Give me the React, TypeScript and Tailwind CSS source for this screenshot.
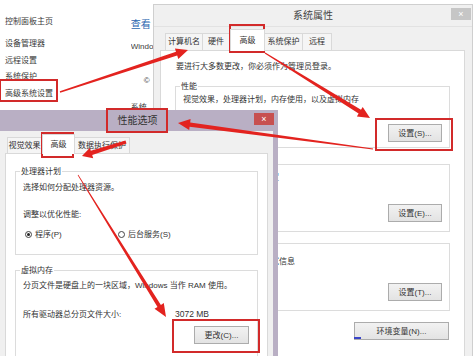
import React from "react";

const FONT = "font-['Liberation_Sans','Noto_Sans_CJK_SC',sans-serif]";

type Pt = [number, number];

// tapered arrow: thin at the tail, wide near the head
function arrowPoints(a: Pt, b: Pt, w1 = 1, w2 = 4, hl = 12, hw = 11) {
  const dx = b[0] - a[0];
  const dy = b[1] - a[1];
  const len = Math.hypot(dx, dy);
  const ux = dx / len;
  const uy = dy / len;
  const nx = -uy;
  const ny = ux;
  const bx = b[0] - ux * hl;
  const by = b[1] - uy * hl;
  const p = (x: number, y: number) => `${x.toFixed(1)},${y.toFixed(1)}`;
  return [
    p(a[0] + (nx * w1) / 2, a[1] + (ny * w1) / 2),
    p(bx + (nx * w2) / 2, by + (ny * w2) / 2),
    p(bx + (nx * hw) / 2, by + (ny * hw) / 2),
    p(b[0], b[1]),
    p(bx - (nx * hw) / 2, by - (ny * hw) / 2),
    p(bx - (nx * w2) / 2, by - (ny * w2) / 2),
    p(a[0] - (nx * w1) / 2, a[1] - (ny * w1) / 2),
  ].join(" ");
}

const arrows: { a: Pt; b: Pt; w1?: number; w2?: number; hl?: number; hw?: number }[] = [
  { a: [60, 92], b: [188, 50], w1: 1.5, w2: 4 },
  { a: [265, 53], b: [370, 118], w1: 1, w2: 4.5 },
  { a: [373, 149], b: [178, 123], w1: 0.8, w2: 4.5 },
  { a: [126, 142], b: [82, 156], w1: 3, w2: 4.5, hl: 10, hw: 11 },
  { a: [78, 175], b: [166, 317], w1: 0.8, w2: 4, hl: 13, hw: 11 },
];

const boxes = [
  { x: 0, y: 80, w: 57, h: 21 },
  { x: 230, y: 25, w: 34, h: 27 },
  { x: 376, y: 119, w: 76, h: 31 },
  { x: 107, y: 109, w: 60, h: 23 },
  { x: 42, y: 133, w: 31, h: 24 },
  { x: 173, y: 320, w: 86, h: 32 },
];

function Btn({ label, className }: { label: string; className: string }) {
  return (
    <div
      className={`h-[18px] border border-[#acacac] bg-linear-to-b from-[#f2f2f2] to-[#e3e3e3] flex items-center justify-center text-[8px] text-[#333] ${className}`}
    >
      {label}
    </div>
  );
}

function Group({ label, className, children }: { label: string; className: string; children?: React.ReactNode }) {
  return (
    <div className={`relative border border-[#dcdcdc] ${className}`}>
      <span className="absolute -top-[6px] left-[4px] bg-white px-[1px] text-[8px] leading-[11px] text-[#333]">{label}</span>
      {children}
    </div>
  );
}

function LeftPane() {
  return (
    <div className="absolute left-0 top-0 w-[153px] h-[125px] bg-white flex text-[8px] leading-[11px] text-[#3a3a3a]">
      <div className="w-[133px] pl-[5px] pt-[16px] flex flex-col">
        <span>控制面板主页</span>
        <span className="mt-[11px]">设备管理器</span>
        <span className="mt-[6px]">远程设置</span>
        <span className="mt-[5px]">系统保护</span>
        <span className="mt-[6px]">高级系统设置</span>
      </div>
      <div className="flex flex-col pt-[18px] whitespace-nowrap overflow-hidden">
        <span className="text-[10px] leading-[14px] text-[#2a66b0]">查看</span>
        <span className="mt-[9px]">Windo</span>
        <span className="mt-[23px] pl-[13px]">©</span>
        <span className="mt-[16px]">系统</span>
      </div>
    </div>
  );
}

function SystemProps() {
  return (
    <div className="absolute left-[153px] top-[4px] w-[320px] h-[360px] bg-[#f0f0f0] border border-[#cfcfcf] flex flex-col">
      <div className="h-[22px] grid grid-cols-[1fr_auto_1fr] border-b border-[#e2e2e2]">
        <div />
        <span className="text-[10px] leading-[22px] text-[#444]">系统属性</span>
        <div className="flex justify-end">
          <div className="mt-[3px] mr-[1px] w-[20px] h-[12px] bg-[#c6c6c6] flex items-center justify-center text-[9px] leading-none text-white">×</div>
        </div>
      </div>
      <div className="h-[23px] pl-[11px] flex items-end text-[8px] text-[#333]">
        <div className="w-[38px] h-[17px] border border-[#d9d9d9] border-b-0 bg-[#f5f5f5] flex items-center justify-center">计算机名</div>
        <div className="w-[27px] h-[17px] border border-[#d9d9d9] border-b-0 border-l-0 bg-[#f5f5f5] flex items-center justify-center">硬件</div>
        <div className="relative z-10 -mb-px w-[35px] h-[22px] border border-[#d9d9d9] border-b-0 bg-white flex items-center justify-center">高级</div>
        <div className="w-[38px] h-[17px] border border-[#d9d9d9] border-b-0 border-l-0 bg-[#f5f5f5] flex items-center justify-center">系统保护</div>
        <div className="w-[29px] h-[17px] border border-[#d9d9d9] border-b-0 border-l-0 bg-[#f5f5f5] flex items-center justify-center">远程</div>
      </div>
      <div className="flex-1 ml-[6px] mr-[7px] bg-white border border-[#d9d9d9] flex flex-col text-[8px] leading-[11px] text-[#333]">
        <span className="pl-[15px] pt-[10px]">要进行大多数更改，你必须作为管理员登录。</span>
        <Group label="性能" className="ml-[14px] mt-[14px] w-[275px] h-[62px] flex flex-col">
          <span className="pl-[7px] pt-[7px]">视觉效果，处理器计划，内存使用，以及虚拟内存</span>
          <Btn label="设置(S)..." className="w-[54px] mt-auto mb-[5px] mr-[7px] self-end" />
        </Group>
        <Group label="用户配置文件" className="ml-[14px] mt-[16px] w-[275px] h-[68px] flex flex-col">
          <span className="pl-[7px] pt-[7px]">与登录帐户相关的桌面设置</span>
          <Btn label="设置(E)..." className="w-[54px] mt-auto mb-[9px] mr-[7px] self-end" />
        </Group>
        <Group label="启动和故障恢复" className="ml-[14px] mt-[11px] w-[275px] h-[68px] flex flex-col">
          <span className="pl-[7px] pt-[12px]">系统启动、系统故障和调试信息</span>
          <Btn label="设置(T)..." className="w-[54px] mt-auto mb-[9px] mr-[7px] self-end" />
        </Group>
        <Btn label="环境变量(N)..." className="w-[95px] mt-[11px] mr-[15px] self-end" />
      </div>
    </div>
  );
}

function Radio({ checked, label }: { checked?: boolean; label: string }) {
  return (
    <div className="flex items-center gap-[3px]">
      <div className="w-[7px] h-[7px] rounded-full border border-[#444] bg-white flex items-center justify-center">
        {checked && <div className="w-[3px] h-[3px] rounded-full bg-[#222]" />}
      </div>
      <span>{label}</span>
    </div>
  );
}

function PerfOptions() {
  return (
    <div className="absolute left-[-10px] top-[110px] w-[288px] h-[260px] bg-[#b9afc4] flex flex-col">
      <div className="h-[21px] grid grid-cols-[1fr_auto_1fr] pl-[7px]">
        <div />
        <span className="text-[10px] leading-[22px] text-[#333]">性能选项</span>
        <div className="flex justify-end">
          <div className="mt-[3px] mr-[4px] w-[20px] h-[12px] bg-[#c75050] flex items-center justify-center text-[9px] leading-none text-white">×</div>
        </div>
      </div>
      <div className="flex-1 ml-[5px] mr-[5px] bg-[#f0f0f0] flex flex-col">
        <div className="h-[22px] pl-[12px] flex items-end text-[8px] text-[#333]">
          <div className="w-[35px] h-[16px] border border-[#d9d9d9] border-b-0 bg-[#f5f5f5] flex items-center justify-center">视觉效果</div>
          <div className="relative z-10 -mb-px w-[33px] h-[20px] border border-[#d9d9d9] border-b-0 bg-white flex items-center justify-center">高级</div>
          <div className="w-[55px] h-[16px] border border-[#d9d9d9] border-b-0 border-l-0 bg-[#f5f5f5] flex items-center justify-center">数据执行保护</div>
        </div>
        <div className="flex-1 ml-[10px] mr-[5px] bg-white border border-[#d9d9d9] flex flex-col text-[8px] leading-[11px] text-[#333]">
          <Group label="处理器计划" className="ml-[9px] mt-[17px] w-[243px] h-[84px] flex flex-col">
            <span className="pl-[7px] pt-[10px]">选择如何分配处理器资源。</span>
            <span className="pl-[7px] mt-[16px]">调整以优化性能:</span>
            <div className="pl-[9px] mt-[9px] flex">
              <div className="w-[93px]">
                <Radio checked label="程序(P)" />
              </div>
              <Radio label="后台服务(S)" />
            </div>
          </Group>
          <Group label="虚拟内存" className="ml-[9px] mt-[15px] w-[243px] flex-1 flex flex-col">
            <span className="pl-[7px] pt-[9px]">分页文件是硬盘上的一块区域，Windows 当作 RAM 使用。</span>
            <div className="pl-[7px] mt-[18px] flex">
              <span className="w-[152px]">所有驱动器总分页文件大小:</span>
              <span className="text-[8.5px]">3072 MB</span>
            </div>
            <Btn label="更改(C)..." className="w-[55px] mt-[6px] mr-[8px] self-end" />
          </Group>
        </div>
      </div>
    </div>
  );
}

export default function App() {
  return (
    <div className={`relative w-[476px] h-[356px] overflow-hidden bg-white ${FONT}`}>
      <LeftPane />
      <SystemProps />
      <PerfOptions />
      <svg className="absolute inset-0 w-[476px] h-[356px] pointer-events-none" viewBox="0 0 476 356">
        {boxes.map((r, i) => (
          <rect key={i} x={r.x} y={r.y} width={r.w} height={r.h} fill="none" stroke="#d22a2a" strokeWidth={2} />
        ))}
        {arrows.map((ar, i) => (
          <polygon key={i} points={arrowPoints(ar.a, ar.b, ar.w1, ar.w2, ar.hl, ar.hw)} fill="#e3231f" />
        ))}
        <rect x={354} y={337} width={7} height={2} fill="#3a45c8" />
      </svg>
    </div>
  );
}
